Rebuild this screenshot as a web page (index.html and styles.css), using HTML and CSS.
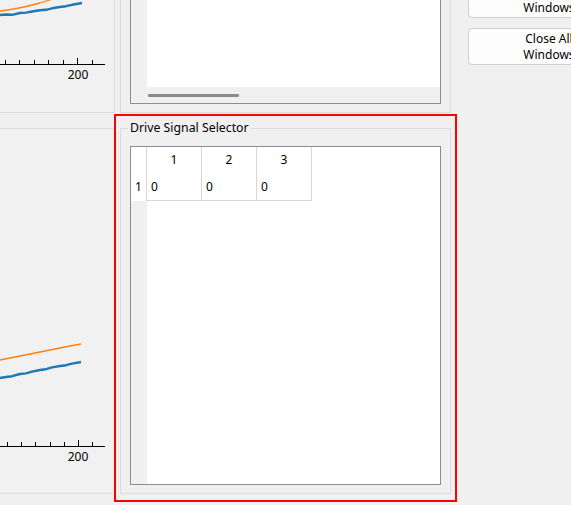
FILE: index.html
```html
<html>
  <head>
    <link rel="stylesheet" href="styles.css">
  </head>
  <body>
    <div class="window">
      <div class="plots">
        <div class="plot plot-top">
          <svg width="114" height="112" viewBox="0 0 114 112">
            <path class="trace trace-orange" d="M0,11 L8,10 L16,8.5 L24,7 L32,5 L40,3 L48,0.5 L56,-2"/>
            <path class="trace trace-blue" d="M0,15 L6,14.5 L12,14.8 L20,13 L26,12.6 L32,11.5 L40,10.2 L46,9.8 L52,8.3 L60,7 L66,6.2 L72,4.8 L82,3"/>
            <path class="axis" d="M0,64.5H105"/>
            <path class="axis" d="M5.5,60V64 M19.5,60V64 M34.5,60V64 M48.5,60V64 M63.5,60V64 M92.5,60V64 M77.5,58V64"/>
            <text class="tick-label" x="78" y="79">200</text>
          </svg>
        </div>
        <div class="plot plot-bottom">
          <svg width="114" height="364" viewBox="0 0 114 364">
            <path class="trace trace-orange" d="M0,231 L10,229 L20,227 L30,225 L40,223 L50,221 L60,219 L70,217 L81,215"/>
            <path class="trace trace-blue" d="M0,249 L6,248 L12,247.2 L20,245 L26,244.4 L32,242.6 L40,241 L46,240.2 L52,238.4 L60,237 L66,236.2 L72,234.6 L81,233"/>
            <path class="axis" d="M0,317.5H105"/>
            <path class="axis" d="M7.5,313V317 M21.5,313V317 M35.5,313V317 M50.5,313V317 M64.5,313V317 M92.5,313V317 M78.5,311V317"/>
            <text class="tick-label" x="78" y="332">200</text>
          </svg>
        </div>
      </div>

      <div class="panels">
        <fieldset class="group group-top">
          <div class="sheet sheet-top">
            <div class="sheet-body">
              <div class="vheader"></div>
              <div class="cells"></div>
            </div>
            <div class="hscroll"><div class="hscroll-thumb"></div></div>
          </div>
        </fieldset>

        <fieldset class="group group-bottom">
          <legend>Drive Signal Selector</legend>
          <div class="sheet sheet-bottom">
            <div class="grid">
              <div class="corner"></div>
              <div class="col-head">1</div>
              <div class="col-head">2</div>
              <div class="col-head">3</div>
              <div class="blank"></div>
              <div class="row-head">1</div>
              <div class="cell">0</div>
              <div class="cell">0</div>
              <div class="cell">0</div>
              <div class="blank"></div>
              <div class="vfill"></div>
              <div class="blank wide"></div>
            </div>
          </div>
        </fieldset>
      </div>

      <div class="actions">
        <button class="action">Close Plot<br>Windows</button>
        <button class="action">Close All<br>Windows</button>
      </div>
    </div>
    <div class="highlight"></div>
  </body>
</html>
```

FILE: styles.css
```css
html, body {
  margin: 0;
}
body {
  width: 571px;
  height: 505px;
  overflow: hidden;
  position: relative;
  background-color: #f0f0f0;
  color: #000;
  font-family: "Noto Sans", sans-serif;
  font-size: 12px;
}
.window {
  display: flex;
  align-items: flex-start;
}

/* plots on the left */
.plots {
  flex: none;
  width: 115px;
}
.plot {
  width: 114px;
  border-right: 1px solid #dcdcdc;
  background-color: #f1f1f1;
}
.plot svg {
  display: block;
}
.plot-top {
  height: 112px;
  border-bottom: 1px solid #dcdcdc;
}
.plot-bottom {
  margin-top: 15px;
  height: 364px;
  border-top: 1px solid #dcdcdc;
  border-bottom: 1px solid #dcdcdc;
}
.trace {
  fill: none;
  stroke-linejoin: round;
}
.trace-orange {
  stroke: #ff7f0e;
  stroke-width: 1.3;
}
.trace-blue {
  stroke: #1f77b4;
  stroke-width: 2.4;
}
.axis {
  fill: none;
  stroke: #000;
  stroke-width: 1;
}
.tick-label {
  font-family: "Noto Sans", sans-serif;
  font-size: 12px;
  text-anchor: middle;
  fill: #000;
}

/* group boxes */
.panels {
  flex: none;
  width: 331px;
  margin-left: 5px;
}
.group {
  margin: 0;
  min-width: 0;
  border: 1px solid #dcdcdc;
  padding: 0 9px 8px 9px;
}
.group-top {
  border-top: none;
}
.group-bottom {
  margin-top: 7px;
  padding-top: 10px;
}
.group legend {
  margin-left: -2px;
  padding: 0 2px;
  line-height: 16px;
  font-size: 12.3px;
}

/* table widgets */
.sheet {
  border: 1px solid #8a8c96;
  background-color: #fff;
}
.sheet-top {
  border-top: none;
  height: 103px;
}
.sheet-body {
  display: flex;
  height: 87px;
}
.vheader {
  width: 16px;
  background-color: #f0f0f0;
}
.cells {
  flex: 1;
}
.hscroll {
  height: 16px;
  background-color: #f0f0f0;
  overflow: hidden;
}
.hscroll-thumb {
  margin: 7px 0 0 17px;
  width: 91px;
  height: 3px;
  border-radius: 1px;
  background-color: #8a8a8a;
}
.sheet-bottom {
  height: 337px;
}
.grid {
  display: grid;
  grid-template-columns: 16px 55px 55px 55px 1fr;
  grid-template-rows: 26px 28px 1fr;
  height: 100%;
}
.corner, .col-head, .row-head, .cell {
  box-sizing: border-box;
  border-right: 1px solid #d8d8d8;
}
.col-head {
  text-align: center;
  line-height: 26px;
}
.row-head {
  text-align: center;
  line-height: 27px;
}
.cell {
  border-bottom: 1px solid #d8d8d8;
  padding-left: 4px;
  line-height: 27px;
}
.vfill {
  background-color: #f0f0f0;
}
.wide {
  grid-column: 2 / 6;
}

/* buttons on the right */
.actions {
  flex: none;
  display: flex;
  flex-direction: column;
  gap: 10px;
  margin-left: 17px;
  margin-top: -19px;
}
.action {
  width: 162px;
  height: 37px;
  box-sizing: border-box;
  padding: 0;
  border: 1px solid #d0d0d0;
  border-radius: 4px;
  background-color: #fdfdfd;
  color: #000;
  font-family: "Noto Sans", sans-serif;
  font-size: 12px;
  line-height: 16px;
}

.highlight {
  position: absolute;
  left: 114px;
  top: 114px;
  width: 343px;
  height: 388px;
  box-sizing: border-box;
  border: 2px solid #f00;
}
```
